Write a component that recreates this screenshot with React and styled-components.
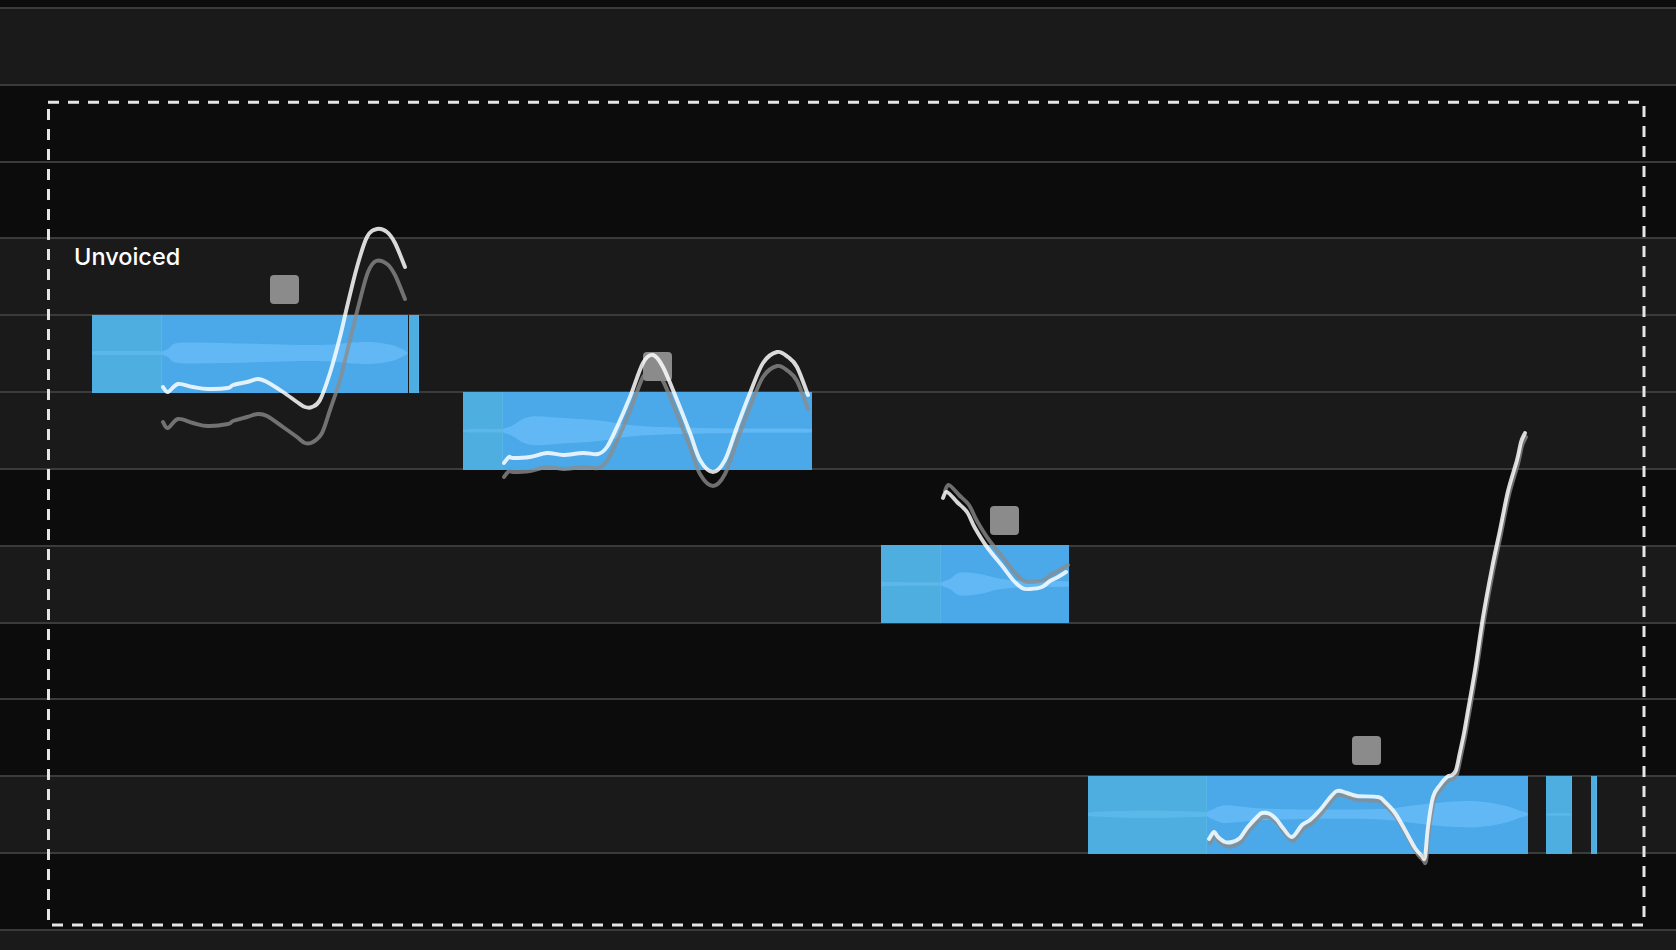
import React from 'react';
import styled, { createGlobalStyle } from 'styled-components';

const ROW = 76.83;
const TOP = 7;

const GlobalStyle = createGlobalStyle`
  html, body { margin: 0; padding: 0; background: #0c0c0c; }
  body { font-family: Inter, "Liberation Sans", sans-serif; overflow: hidden; }
`;

const Editor = styled.div`
  position: relative;
  width: 1676px;
  height: 950px;
  overflow: hidden;
  background: #0c0c0c;
`;

const Lanes = styled.div`
  display: flex;
  flex-direction: column;
  height: 100%;
  padding-top: ${TOP}px;
  box-sizing: border-box;
`;

const Lane = styled.div`
  flex: ${p => (p.$last ? '1 1 auto' : `0 0 ${ROW}px`)};
  box-sizing: border-box;
  border-top: 2px solid #3b3b3b;
  background: ${p => (p.$light ? '#1a1a1a' : '#0c0c0c')};
`;

const Canvas = styled.div`
  position: absolute;
  inset: 0;
`;

const Note = styled.div`
  position: absolute;
  left: ${p => p.$x}px;
  top: ${p => TOP + p.$row * ROW + 0.5}px;
  width: ${p => p.$w}px;
  height: 78px;
  display: flex;
`;

const NoteHead = styled.div`
  position: relative;
  flex: 0 0 ${p => p.$w}px;
  background: #4eaedf;
  box-shadow: inset -1px 0 0 rgba(110, 190, 245, 0.35);
`;

const NoteBody = styled.div`
  position: relative;
  flex: 1 1 auto;
  background: #4ba8e9;
`;

const Wave = styled.svg`
  position: absolute;
  inset: 0;
  width: 100%;
  height: 100%;
  display: block;
`;

const Divider = styled.div`
  flex: 0 0 1px;
  background: #1a1a1a;
`;

const Handle = styled.div`
  position: absolute;
  left: ${p => p.$x}px;
  top: ${p => p.$y}px;
  width: 29px;
  height: 29px;
  border-radius: 4px;
  background: #8b8b8b;
`;

const Label = styled.div`
  position: absolute;
  left: 74px;
  top: 245px;
  font-family: Inter, "Liberation Sans", sans-serif;
  font-size: 23.5px;
  font-weight: 500;
  line-height: 24px;
  color: #ffffff;
  white-space: nowrap;
`;

const Overlay = styled.svg`
  position: absolute;
  inset: 0;
  width: 1676px;
  height: 950px;
  pointer-events: none;
`;

function smooth(pts, closed = false) {
  const n = pts.length;
  const get = i => {
    if (closed) return pts[(i + n) % n];
    return pts[Math.max(0, Math.min(n - 1, i))];
  };
  let d = `M${pts[0][0]},${pts[0][1]}`;
  const last = closed ? n : n - 1;
  for (let i = 0; i < last; i++) {
    const p0 = get(i - 1), p1 = get(i), p2 = get(i + 1), p3 = get(i + 2);
    const c1x = p1[0] + (p2[0] - p0[0]) / 6, c1y = p1[1] + (p2[1] - p0[1]) / 6;
    const c2x = p2[0] - (p3[0] - p1[0]) / 6, c2y = p2[1] - (p3[1] - p1[1]) / 6;
    d += ` C${c1x.toFixed(2)},${c1y.toFixed(2)} ${c2x.toFixed(2)},${c2y.toFixed(2)} ${p2[0]},${p2[1]}`;
  }
  return closed ? d + ' Z' : d;
}

function envelope(half, c) {
  const top = half.map(([x, h]) => [x, +(c - h).toFixed(2)]);
  const bot = half.slice().reverse().map(([x, h]) => [x, +(c + h).toFixed(2)]);
  return smooth(top.concat(bot), true);
}

const shift = (pts, dx, dy) => pts.map(([x, y]) => [x + dx, y + dy]);

const notes = [
  {
    x: 92, w: 316, row: 4, head: 70, center: 38,
    headWave: [[0, 1.5], [20, 2], [50, 2], [70, 1.5]],
    bodyWave: [[0, 1.5], [6, 4], [13, 9.5], [30, 10.5], [60, 10], [100, 9], [138, 8], [170, 8.5], [190, 10.5], [212, 10.8], [230, 8], [240, 4], [245, 1]],
  },
  {
    x: 463, w: 349, row: 5, head: 40, center: 38.7,
    headWave: [[0, 1], [10, 1.8], [30, 1.8], [40, 1.5]],
    bodyWave: [[0, 1.5], [9, 5], [27, 14], [60, 12.8], [94, 10.5], [127, 5.8], [160, 3.7], [227, 2.2], [307, 1.8]],
  },
  {
    x: 881, w: 188, row: 7, head: 60, center: 39,
    headWave: [[0, 2.2], [6, 2], [30, 1.8], [60, 1.5]],
    bodyWave: [[0, 1.5], [9, 5], [19, 11.5], [39, 10], [59, 5.3], [85, 3], [127, 2.5]],
  },
  {
    x: 1088, w: 440, row: 10, head: 119, center: 38.2,
    headWave: [[0, 1.5], [20, 3], [60, 3.8], [100, 3], [119, 2]],
    bodyWave: [[0, 2], [6, 5], [16, 8.7], [30, 8], [56, 5.8], [106, 4.7], [173, 5.3], [206, 8.8], [240, 12.3], [270, 13], [296, 9], [313, 3.5], [320, 1.5]],
  },
  { x: 1546, w: 26, row: 10, head: 26, center: 38.5, headWave: [[0, 1], [26, 1]] },
  { x: 1591, w: 6, row: 10, head: 6, center: 38.5 },
];

const handles = [
  [270, 275], [643, 352], [990, 506], [1352, 736],
];

const curveA = [[163,387],[168,392],[178,384],[193,387],[208,389],[228,388],[233,385],[247,382],[258,379],[267,382],[283,392],[297,402],[305,407],[312,407],[320,400],[330,373],[340,337],[347,307],[357,267],[367,237],[377,229],[387,232],[395,243],[405,267]];
const curveAGray = [[163,422],[168,428],[178,419],[193,423],[208,426],[228,424],[233,421],[247,417],[258,414],[267,416],[283,427],[297,437],[305,443],[313,442],[322,433],[330,410],[340,380],[350,340],[360,300],[368,272],[376,261],[387,264],[395,275],[405,299]];
const curveB = [[504,463],[509,457],[513,458],[530,457],[547,453],[563,455],[583,453],[598,454],[607,447],[617,427],[630,397],[643,363],[653,355],[663,367],[677,400],[690,433],[700,460],[713,472],[725,460],[737,427],[750,393],[763,363],[777,352],[788,357],[797,367],[808,395]];
const curveC = [[943,498],[947,492],[957,502],[967,512],[975,528],[987,547],[1003,567],[1013,580],[1022,588],[1030,589],[1042,587],[1050,581],[1058,577],[1066,572]];
const curveD = [[1209,839],[1214,832],[1218,837],[1225,842],[1232,842],[1240,838],[1247,828],[1257,817],[1262,813],[1270,814],[1277,820],[1283,828],[1292,837],[1302,825],[1310,820],[1320,810],[1328,800],[1337,791],[1347,793],[1357,796],[1378,797],[1385,802],[1395,813],[1405,830],[1415,848],[1422,856],[1425,857],[1428,827],[1433,797],[1440,785],[1447,777],[1452,775],[1456,770],[1460,752],[1464,733],[1467,716],[1475,670],[1483,617],[1492,568],[1500,530],[1508,491],[1517,460],[1521,442],[1525,433]];

const grayCurves = [curveAGray, shift(curveB, 0, 14), shift(curveC, 2, -7), shift(curveD, 1, 4)];
const whiteCurves = [curveA, curveB, curveC, curveD];

const laneLight = [true, false, false, true, true, true, false, true, false, false, true, false, true];

function NoteBlock({ n }) {
  return (
    <Note $x={n.x} $w={n.w} $row={n.row}>
      <NoteHead $w={n.head}>
        {n.headWave && (
          <Wave viewBox={`0 0 ${n.head} 78`} preserveAspectRatio="none">
            <path d={envelope(n.headWave, n.center)} fill="#5cb8e8" />
          </Wave>
        )}
      </NoteHead>
      {n.bodyWave && (
        <NoteBody>
          <Wave viewBox={`0 0 ${n.w - n.head} 78`} preserveAspectRatio="none">
            <path d={envelope(n.bodyWave, n.center)} fill="#62b8f5" />
          </Wave>
        </NoteBody>
      )}
    </Note>
  );
}

export default function App() {
  return (
    <>
      <GlobalStyle />
      <Editor>
        <Lanes>
          {laneLight.map((l, i) => (
            <Lane key={i} $light={l} $last={i === laneLight.length - 1} />
          ))}
        </Lanes>
        <Canvas>
          {notes.map((n, i) => (
            <NoteBlock key={i} n={n} />
          ))}
          <Note $x={408} $w={11} $row={4}>
            <Divider />
            <NoteHead $w={10} />
          </Note>
          {handles.map(([x, y], i) => (
            <Handle key={i} $x={x} $y={y} />
          ))}
          <Label>Unvoiced</Label>
          <Overlay viewBox="0 0 1676 950">
            <g fill="none" strokeLinecap="round" strokeLinejoin="round">
              {grayCurves.map((c, i) => (
                <path key={'g' + i} d={smooth(c)} stroke="rgba(140,140,140,0.78)" strokeWidth="3.9" />
              ))}
              {whiteCurves.map((c, i) => (
                <path key={'w' + i} d={smooth(c)} stroke="rgba(255,255,255,0.84)" strokeWidth="3.9" />
              ))}
            </g>
            <g stroke="#e6e6e6" strokeWidth="3" strokeDasharray="11 9" fill="none">
              <path d="M48,102.3 H1645" />
              <path d="M48.5,109 V926" />
              <path d="M1644,106 V926" />
              <path d="M52,925 H1645" />
            </g>
          </Overlay>
        </Canvas>
      </Editor>
    </>
  );
}
